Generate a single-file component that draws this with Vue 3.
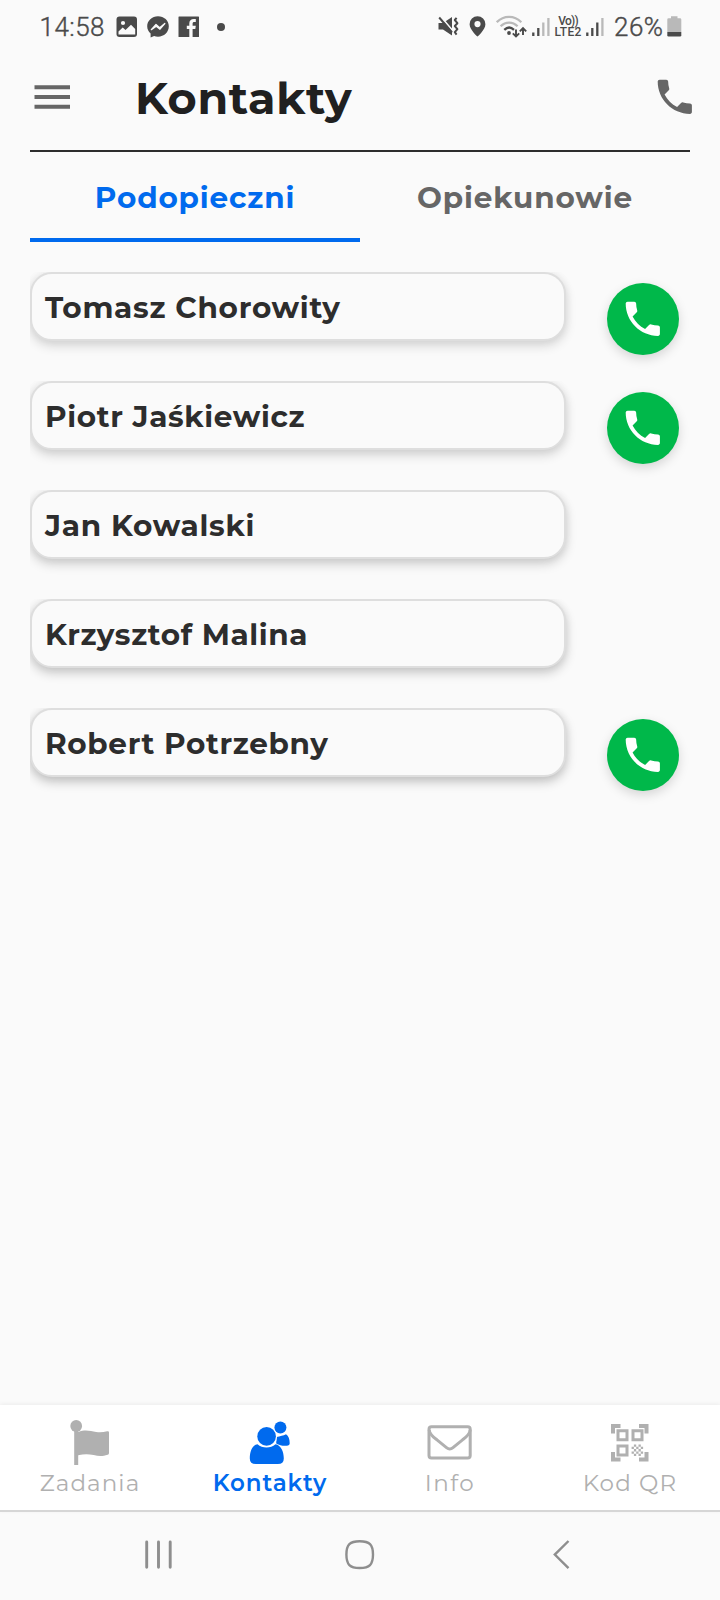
<script setup>
import { ref } from 'vue'

const activeTab = ref(0)
const tabs = [
  { label: 'Podopieczni', width: 199.5 },
  { label: 'Opiekunowie', width: 215 }
]

const contacts = [
  { name: 'Tomasz Chorowity', width: 295, phone: true, shade: 0.14 },
  { name: 'Piotr Jaśkiewicz', width: 259.5, phone: true, shade: 0.16 },
  { name: 'Jan Kowalski', width: 209.5, phone: false, shade: 0.18 },
  { name: 'Krzysztof Malina', width: 262.5, phone: false, shade: 0.2 },
  { name: 'Robert Potrzebny', width: 283, phone: true, shade: 0.22 }
]

const sections = [
  { id: 'tasks', label: 'Zadania', width: 99.5 },
  { id: 'contacts', label: 'Kontakty', width: 113.5 },
  { id: 'info', label: 'Info', width: 49 },
  { id: 'qr', label: 'Kod QR', width: 93.5 }
]
const activeSection = ref('contacts')

const phonePath =
  'M6.62 10.79c1.44 2.83 3.76 5.14 6.59 6.59l2.2-2.2c.27-.27.67-.36 1.02-.24 1.12.37 2.33.57 3.57.57.55 0 1 .45 1 1V20c0 .55-.45 1-1 1-9.39 0-17-7.61-17-17 0-.55.45-1 1-1h3.5c.55 0 1 .45 1 1 0 1.25.2 2.45.57 3.57.11.35.03.74-.25 1.02l-2.2 2.2z'

// Spreads a label's letters out to its design width.
const vFit = {
  mounted(el, { value }) {
    const natural = el.getBoundingClientRect().width
    el.style.letterSpacing = `${(value - natural) / (el.textContent.length - 1)}px`
  }
}
</script>

<template>
  <div class="screen">
    <div class="status">
      <span v-fit="65" class="clock">14:58</span>
      <svg class="s-image" width="22" height="22" viewBox="0 0 22 22">
        <rect x=".5" y=".5" width="20.5" height="20.5" rx="3" fill="#4a4a4a" />
        <circle cx="7" cy="7" r="2.1" fill="#fafafa" />
        <path d="M2.500 18.500v-3l4.200-4 2.800 2.600 5.500-5.300 4.200 4.200v5.500z" fill="#fafafa" />
      </svg>
      <svg class="s-msg" width="22" height="22" viewBox="0 0 22 22">
        <path d="M11 .2C5 .2.2 4.600.2 10.300c0 3 1.300 5.500 3.400 7.300V21.500l3.500-1.400c1.200.4 2.500.6 3.900.6 6 0 10.800-4.500 10.800-10.400S17 .2 11 .2z" fill="#4a4a4a" />
        <path d="M4.300 13.600 9 8.500l3.700 3.200L17.800 7.500l-4.800 5.700-3.700-3z" fill="#fafafa" stroke="#fafafa" stroke-width="1.300" stroke-linejoin="round" />
      </svg>
      <svg class="s-fb" width="22" height="22" viewBox="0 0 22 22">
        <rect x=".5" y=".5" width="20.500" height="20.500" rx=".6" fill="#4a4a4a" />
        <path d="M11.300 21v-8H8.800V9.800h2.500V7.500c0-2.900 1.700-4.500 4.500-4.500h2v3h-1.500c-1.200 0-1.700.6-1.700 1.700v2.100h3.200l-.5 3.200h-2.700v8z" fill="#fafafa" />
      </svg>
      <i class="dot"></i>
      <svg class="s-mute" width="21" height="22" viewBox="0 0 21 22">
        <path d="M.5 7h4.500l9-6v18.500l-9-6H.5z" fill="#4a4a4a" />
        <path d="M2.500 .3 15 15" stroke="#fafafa" stroke-width="1.800" />
        <path d="M1.200 1.500 14 16.500" stroke="#4a4a4a" stroke-width="2" />
        <path d="M18.600 1.800 16.800 4l2.600 3.200L16.800 10l2.600 3.200-2.600 3 1.800 2.400" fill="none" stroke="#4a4a4a" stroke-width="2" stroke-linejoin="round" />
      </svg>
      <svg class="s-pin" width="17" height="21" viewBox="0 0 17 21">
        <path fill-rule="evenodd" d="M8.500.3a7.900 7.900 0 0 0-7.900 7.900c0 5.600 7.900 12.300 7.900 12.300s7.900-6.700 7.900-12.300A7.900 7.900 0 0 0 8.500.3zm0 4.700a3.100 3.100 0 1 1 0 6.200 3.100 3.100 0 0 1 0-6.200z" fill="#4a4a4a" />
      </svg>
      <svg class="s-wifi" width="31" height="24" viewBox="0 0 31 24">
        <g fill="none" stroke-width="2.300">
          <path d="M.8 7.200c7-7 17.500-7 24.500 0" stroke="#b9b9b9" />
          <path d="M4.600 11.200c5-4.900 12-4.900 17 0" stroke="#b9b9b9" />
          <path d="M8.300 14.800c3-2.900 6.700-2.900 9.700 0" stroke="#4a4a4a" />
          <path d="M20 14.500V21M16.800 18.300l3.200 3.200 3.200-3.200M27 20V13.500M23.800 16.300l3.200-3.200 3.200 3.200" stroke="#4a4a4a" stroke-width="1.900" />
        </g>
        <circle cx="13" cy="18" r="1.900" fill="#4a4a4a" />
      </svg>
      <svg class="s-sig1" width="18" height="20" viewBox="0 0 18 20">
        <path d="M1.300 15.500V19M6.300 11V19" stroke="#4a4a4a" stroke-width="2.300" />
        <path d="M11.300 5.500V19M16.400 1V19" stroke="#b9b9b9" stroke-width="2.300" />
      </svg>
      <span class="volte">
        <span v-fit="20.5" class="vo">Vo))</span>
        <span v-fit="27" class="lte">LTE2</span>
      </span>
      <svg class="s-sig2" width="18" height="20" viewBox="0 0 18 20">
        <path d="M1.300 15.500V19M6.300 11V19M11.300 5.500V19" stroke="#4a4a4a" stroke-width="2.300" />
        <path d="M16.400 1V19" stroke="#b9b9b9" stroke-width="2.300" />
      </svg>
      <span v-fit="49" class="percent">26%</span>
      <svg class="s-bat" width="15" height="21" viewBox="0 0 15 21">
        <path d="M4 .2h6.500v2H13q1.300 0 1.300 1.300V16H.3V3.500Q.3 2.200 1.600 2.200H4z" fill="#b9b9b9" />
        <path d="M.3 16h14v3.300q0 1.200-1.300 1.200H1.600Q.3 20.500.3 19.300z" fill="#4a4a4a" />
      </svg>
    </div>

    <header class="header">
      <svg class="menu" width="36" height="24" viewBox="0 0 36 24">
        <path d="M.5 2.200H36M.5 12H36M.5 21.800H36" stroke="#666" stroke-width="3.900" />
      </svg>
      <h1 v-fit="216.5" class="title">Kontakty</h1>
      <svg class="call" width="45.600" height="45.600" viewBox="0 0 24 24"><path :d="phonePath" fill="#666" /></svg>
    </header>

    <nav class="tabs">
      <button v-for="(tab, i) in tabs" :key="tab.label" class="tab" :class="{ active: i === activeTab }" @click="activeTab = i">
        <span v-fit="tab.width" class="fit">{{ tab.label }}</span>
      </button>
    </nav>

    <main class="list">
      <div v-for="c in contacts" :key="c.name" class="row">
        <div class="card" :style="{ '--shade': c.shade }">
          <span v-fit="c.width" class="name">{{ c.name }}</span>
        </div>
        <button v-if="c.phone" class="dial">
          <svg width="45.600" height="45.600" viewBox="0 0 24 24"><path :d="phonePath" fill="#fff" /></svg>
        </button>
      </div>
    </main>

    <nav class="bottom">
      <button v-for="s in sections" :key="s.id" class="item" :class="{ active: s.id === activeSection }" @click="activeSection = s.id">
        <svg class="glyph" width="48" height="48" viewBox="0 0 48 48">
          <template v-if="s.id === 'tasks'">
            <circle cx="10.200" cy="8" r="5.900" fill="currentColor" />
            <path d="M8.200 10h4v3.900c7-2.600 12-1 18 0 4 .6 7 .2 11-.6q1.800-.5 1.800 1.200v20.400q0 1.400-1.300 1.800c-5 1.700-9 1.500-14 .4-6-1.200-10-1-15.500.2V47h-4z" fill="currentColor" />
          </template>
          <template v-else-if="s.id === 'contacts'">
            <circle cx="34.400" cy="9.400" r="6" fill="currentColor" />
            <path d="M30.500 19c3.500-1 7-1.400 9.500-2.800 2.600 1.500 3.600 5 3.700 9q0 2.300-3 2.500c-4 .3-7-.3-10.500-2.300z" fill="currentColor" />
            <circle cx="20.600" cy="18.600" r="10.500" fill="#fff" />
            <circle cx="20.600" cy="18.400" r="9.300" fill="currentColor" />
            <path d="M11.500 26.200c5 4.300 13 4.300 18 0 5.600 1 8.300 7.500 8.300 14.300q0 5.500-6 5.500H9.800q-6 0-6-5.500c0-6.800 2.100-13.300 7.700-14.300z" fill="currentColor" />
          </template>
          <g v-else-if="s.id === 'info'" fill="none" stroke="currentColor" stroke-width="3">
            <rect x="3" y="8.800" width="41.200" height="31.300" rx="2.500" />
            <path d="M3.200 11.800C3.500 16.500 7.500 19.200 11 21.900L20.500 29.600Q23.800 32.300 27 29.600L36.500 21.900C40 19.200 44 16.500 44.200 11.800" />
          </g>
          <g v-else fill="currentColor">
            <path d="M5 5.900h9.500v4H9v5.500H5zM33 5.900h9.500v9.500h-4V9.900H33zM5 33.900h4v5.500h5.500v4H5zM38.500 33.900h4v9.500H33v-4h5.500z" />
            <path fill-rule="evenodd" d="M10.500 11.300h12v12h-12zm3 3v6h6v-6zM25.500 11.300h12v12h-12zm3 3v6h6v-6zM10.500 26.500h12v12h-12zm3 3v6h6v-6z" />
            <path d="M27.900 26.500h2.300v2.300h-2.300zM32.500 26.500h2.300v2.300h-2.300zM25.600 28.800h2.300v2.300h-2.300zM30.200 28.800h2.300v2.300h-2.300zM34.800 28.800h2.300v2.300h-2.300zM27.900 31.100h2.300v2.300h-2.300zM32.500 31.100h2.300v2.300h-2.300zM25.600 33.400h2.300v2.300h-2.300zM30.200 33.400h2.300v2.300h-2.300zM34.800 33.400h2.300v2.300h-2.300zM27.900 35.700h2.300V38h-2.300zM32.500 35.700h2.300V38h-2.300z" />
          </g>
        </svg>
        <span v-fit="s.width" class="fit">{{ s.label }}</span>
      </button>
    </nav>

    <div class="system">
      <svg class="recents" width="28" height="30" viewBox="0 0 28 30">
        <path d="M2.700 2V27.300M14.500 2V27.300M26.200 2V27.300" stroke="#8e8e8e" stroke-width="2.900" stroke-linecap="round" />
      </svg>
      <svg class="home" width="30" height="30" viewBox="0 0 30 30">
        <path d="M14.700 1.200C24.500 1.200 28 4.500 28 14.600S24.500 28 14.700 28 1.400 24.700 1.400 14.600 4.900 1.200 14.700 1.200z" fill="none" stroke="#8e8e8e" stroke-width="2.400" />
      </svg>
      <svg class="back" width="17" height="30" viewBox="0 0 17 30">
        <path d="M15.500 1 1.800 14.600 15.500 28.200" fill="none" stroke="#8e8e8e" stroke-width="2.400" />
      </svg>
    </div>
  </div>
</template>

<style>
body {
  background: #fafafa;
}
</style>

<style scoped>
.screen {
  width: 720px;
  height: 1600px;
  display: flex;
  flex-direction: column;
  overflow: hidden;
  background: #fafafa;
  color: #2d2d2d;
  font-family: Montserrat, Inter, sans-serif;
}
svg {
  display: block;
  flex: none;
}
button {
  border: 0;
  padding: 0;
  background: none;
  font-family: inherit;
}
.status {
  height: 46px;
  box-sizing: border-box;
  padding: 7px 0 0 39.500px;
  display: flex;
  align-items: center;
  font-family: Roboto, sans-serif;
  color: #4a4a4a;
}
.clock,
.percent {
  flex: none;
  font-size: 26px;
  line-height: 30px;
  font-weight: 300;
  -webkit-text-stroke: 0.4px #4a4a4a;
}
.clock { width: max-content; }
.s-image { margin-left: 11px; }
.s-msg { margin-left: 9px; }
.s-fb { margin-left: 9px; }
.dot {
  width: 8px;
  height: 8px;
  margin-left: 17.500px;
  border-radius: 50%;
  background: #4a4a4a;
}
.s-mute { margin-left: auto; }
.s-pin { margin-left: 10px; }
.s-wifi { margin-left: 10px; }
.s-sig1 { margin-left: 5px; }
.volte {
  width: 27px;
  margin-left: 5px;
  display: flex;
  flex-direction: column;
  align-items: center;
  font-weight: 500;
  white-space: nowrap;
}
.vo,
.lte {
  font-size: 12px;
  line-height: 11px;
}
.s-sig2 { margin-left: 4px; }
.percent { margin-left: 10.500px; }
.s-bat { margin-left: 3.500px; margin-right: 38px; }

.header {
  height: 104px;
  margin: 0 30px;
  box-sizing: content-box;
  border-bottom: 2px solid #2d2d2d;
  display: flex;
  align-items: center;
}
.menu { margin: 0 0 3px 4px; }
.title {
  margin: 0 0 0 65px;
  font-size: 44.5px;
  line-height: 52px;
  font-weight: 700;
  color: #202020;
}
.call { margin: 0 -8px 2.500px auto; }

.tabs {
  height: 90px;
  margin: 0 30px;
  display: grid;
  grid-template-columns: 1fr 1fr;
}
.tab {
  display: flex;
  align-items: center;
  justify-content: center;
  padding-top: 4px;
  border-bottom: 4px solid transparent;
  font-size: 29.500px;
  font-weight: 700;
  color: #666;
}
.tab.active {
  color: #006aee;
  border-bottom-color: #006aee;
}
.fit { flex: none; }

.list {
  flex: 1;
  padding: 30px 41px 0 30px;
}
.row {
  height: 109px;
  display: flex;
  justify-content: space-between;
  align-items: flex-start;
}
.card {
  width: 536px;
  height: 69px;
  box-sizing: border-box;
  padding: 1px 0 0 13px;
  display: flex;
  align-items: center;
  border: 2px solid #dedede;
  border-radius: 22px;
  box-shadow: 0 5px 11px rgba(0, 0, 0, var(--shade)), 0 0 8px rgba(0, 0, 0, 0.06);
  background: #fafafa;
  clip-path: inset(0 -16px -20px 0);
}
.name {
  font-size: 29.500px;
  line-height: 36px;
  font-weight: 700;
}
.dial {
  width: 72px;
  height: 72px;
  margin-top: 11px;
  display: flex;
  align-items: center;
  justify-content: center;
  border-radius: 50%;
  background: #00b84a;
  box-shadow: 0 4px 11px rgba(0, 0, 0, 0.15);
}
.dial svg { margin-bottom: 1px; }

.bottom {
  height: 105px;
  display: grid;
  grid-template-columns: repeat(4, 1fr);
  background: #fff;
  border-bottom: 2px solid #d6d6d6;
  box-shadow: 0 -1px 4px rgba(0, 0, 0, 0.06);
}
.item {
  display: flex;
  flex-direction: column;
  align-items: center;
  padding-top: 13px;
  font-size: 23px;
  line-height: 28px;
  color: #b0b0b0;
}
.item.active {
  color: #006aee;
  font-weight: 600;
}
.glyph { margin-bottom: 3px; }

.system {
  height: 88px;
  display: flex;
  align-items: flex-start;
  padding-top: 28px;
  box-sizing: border-box;
}
.recents { margin-left: 144px; }
.home { margin-left: 173px; }
.back { margin-left: 178px; }
</style>
